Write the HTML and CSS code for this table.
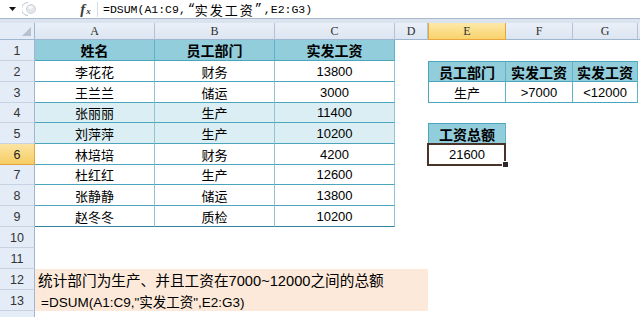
FILE: index.html
```html
<!DOCTYPE html>
<html lang="zh-CN">
<head>
<meta charset="utf-8">
<title>DSUM</title>
<link rel="stylesheet" href="styles.css">
</head>
<body>
<div class="fbar">
  <div class="nb"><svg width="8" height="5" viewBox="0 0 8 5"><path d="M0 0H7L3.5 4Z" fill="#111"/></svg></div>
  <div class="grip"><svg width="16" height="16" viewBox="0 0 16 16"><path d="M6 1.5A6.5 6.5 0 0 0 6 14.5" fill="none" stroke="#b9c2ce" stroke-width="1"/><circle cx="9" cy="8" r="4.5" fill="#e3e7ec" stroke="#c6ccd5" stroke-width="0.8"/><ellipse cx="8.5" cy="6.5" rx="2.5" ry="1.5" fill="#f7f8fa"/></svg></div>
  <div class="gap"></div>
  <div class="fx"><span class="fx-f">f</span><span class="fx-x">x</span></div>
  <div class="sep"></div>
  <div class="formula"><span class="mono">=DSUM(A1:C9,</span><span class="q ql">“</span><span class="fcj">实发工资</span><span class="q qr">”</span><span class="mono">,E2:G3)</span></div>
</div>
<div class="band"></div>
<div class="sheet">
  <!-- column headers -->
  <div class="corner"><svg width="9" height="9" viewBox="0 0 9 9"><path d="M9 0V9H0Z" fill="#b7c2d0"/></svg></div>
  <div class="ch">A</div><div class="ch">B</div><div class="ch">C</div><div class="ch">D</div><div class="ch sel">E</div><div class="ch">F</div><div class="ch">G</div><div class="ch end"></div>

  <!-- row 1 -->
  <div class="rh">1</div>
  <div class="c hd hR bB">姓名</div><div class="c hd hR bB">员工部门</div><div class="c hd hR bB">实发工资</div>
  <div class="c"></div><div class="c"></div><div class="c"></div><div class="c"></div><div class="c"></div>

  <!-- row 2 -->
  <div class="rh">2</div>
  <div class="c vR bB">李花花</div><div class="c vR bB">财务</div><div class="c vR bB">13800</div>
  <div class="c"></div>
  <div class="c hd bT bL hR bB">员工部门</div><div class="c hd bT hR bB">实发工资</div><div class="c hd bT hR bB">实发工资</div><div class="c"></div>

  <!-- row 3 -->
  <div class="rh">3</div>
  <div class="c vR bB">王兰兰</div><div class="c vR bB">储运</div><div class="c vR bB">3000</div>
  <div class="c"></div>
  <div class="c bL hR bB">生产</div><div class="c hR bB">&gt;7000</div><div class="c hR bB">&lt;12000</div><div class="c"></div>

  <!-- row 4 -->
  <div class="rh">4</div>
  <div class="c lt vR bB">张丽丽</div><div class="c lt vR bB">生产</div><div class="c lt vR bB">11400</div>
  <div class="c"></div><div class="c"></div><div class="c"></div><div class="c"></div><div class="c"></div>

  <!-- row 5 -->
  <div class="rh">5</div>
  <div class="c lt vR bB">刘萍萍</div><div class="c lt vR bB">生产</div><div class="c lt vR bB">10200</div>
  <div class="c"></div>
  <div class="c hd bT bL hR bB">工资总额</div><div class="c"></div><div class="c"></div><div class="c"></div>

  <!-- row 6 -->
  <div class="rh sel">6</div>
  <div class="c vR bB">林培培</div><div class="c vR bB">财务</div><div class="c vR bB">4200</div>
  <div class="c"></div>
  <div class="c active">21600</div><div class="c"></div><div class="c"></div><div class="c"></div>

  <!-- row 7 -->
  <div class="rh">7</div>
  <div class="c vR bB">杜红红</div><div class="c vR bB">生产</div><div class="c vR bB">12600</div>
  <div class="c"></div><div class="c"></div><div class="c"></div><div class="c"></div><div class="c"></div>

  <!-- row 8 -->
  <div class="rh">8</div>
  <div class="c vR bB">张静静</div><div class="c vR bB">储运</div><div class="c vR bB">13800</div>
  <div class="c"></div><div class="c"></div><div class="c"></div><div class="c"></div><div class="c"></div>

  <!-- row 9 -->
  <div class="rh">9</div>
  <div class="c vR last">赵冬冬</div><div class="c vR last">质检</div><div class="c vR last">10200</div>
  <div class="c"></div><div class="c"></div><div class="c"></div><div class="c"></div><div class="c"></div>

  <!-- row 10 -->
  <div class="rh">10</div>
  <div class="c"></div><div class="c"></div><div class="c"></div><div class="c"></div><div class="c"></div><div class="c"></div><div class="c"></div><div class="c"></div>

  <!-- row 11 -->
  <div class="rh">11</div>
  <div class="c"></div><div class="c"></div><div class="c"></div><div class="c"></div><div class="c"></div><div class="c"></div><div class="c"></div><div class="c"></div>

  <!-- row 12 -->
  <div class="rh">12</div>
  <div class="c note">统计部门为生产、并且工资在7000~12000之间的总额</div>
  <div class="c"></div><div class="c"></div><div class="c"></div><div class="c"></div>

  <!-- row 13 -->
  <div class="rh">13</div>
  <div class="c note n2">=DSUM(A1:C9,"实发工资",E2:G3)</div>
  <div class="c"></div><div class="c"></div><div class="c"></div><div class="c"></div>

  <!-- row 14 (only its top edge is visible) -->
  <div class="rh"></div>
  <div class="c"></div><div class="c"></div><div class="c"></div><div class="c"></div><div class="c"></div><div class="c"></div><div class="c"></div><div class="c"></div>
</div>
</body>
</html>
```
FILE: styles.css
```css
html, body {
  margin: 0;
  padding: 0;
}
body {
  width: 640px;
  height: 317px;
  overflow: hidden;
  background: #ffffff;
  font-family: "Liberation Sans", "Noto Sans CJK SC", sans-serif;
  font-size: 13px;
  color: #000;
}

/* formula bar */
.fbar {
  height: 18px;
  display: flex;
  align-items: center;
  background: #ffffff;
  border-bottom: 1px solid #a9b8cb;
}
.nb {
  width: 20px;
  display: flex;
  justify-content: center;
  padding-left: 6px;
  box-sizing: border-box;
}
.grip {
  width: 18px;
  height: 16px;
  display: flex;
  align-items: center;
  margin-left: 2px;
}
.gap {
  width: 34px;
}
.fx {
  width: 23px;
  display: flex;
  align-items: baseline;
  justify-content: center;
  font-family: "Liberation Serif", serif;
  font-style: italic;
  color: #3b3b3b;
}
.fx-f {
  font-size: 15px;
  font-weight: bold;
}
.fx-x {
  font-size: 9px;
  font-weight: bold;
  margin-left: 1px;
}
.sep {
  width: 1px;
  height: 15px;
  background: #d7dde6;
  margin-right: 5px;
}
.formula {
  white-space: nowrap;
  color: #000;
  display: flex;
  align-items: center;
}
.mono {
  font-family: "Liberation Mono", monospace;
  font-size: 11.5px;
}
.q {
  display: inline-block;
  width: 9px;
  overflow: hidden;
  font-family: "Liberation Mono", monospace;
  font-size: 12px;
}
.ql {
  text-align: right;
}
.qr {
  text-align: left;
}
.fcj {
  font-family: "Noto Sans CJK SC", sans-serif;
  font-size: 13px;
  letter-spacing: 2px;
}

.band {
  height: 4px;
  background: #dbe3ee;
}

/* sheet grid */
.sheet {
  display: grid;
  grid-template-columns: 35px 120px 120px 120px 33px 78px 67px 65px 2px;
  grid-template-rows: 17px 21px 21px 21px 20px 21px 21px 20px 21px 21px 21px 21px 21px 21px 21px;
}
.corner {
  background: #e4ecf7;
  border-right: 1px solid #9eb6ce;
  border-bottom: 1px solid #9eb6ce;
  display: flex;
  align-items: flex-end;
  justify-content: flex-end;
  padding: 0 3px 3px 0;
}
.ch {
  background: linear-gradient(#eaf0f8, #dce5f1);
  border-right: 1px solid #b3c2d5;
  border-bottom: 1px solid #9eb6ce;
  display: flex;
  align-items: center;
  justify-content: center;
  font-family: "Liberation Serif", serif;
  font-size: 12px;
  color: #2f2f2f;
}
.ch.sel {
  background: linear-gradient(#fde9a9, #f9d26c);
  border-left: 1px solid #eba642;
  border-right: 1px solid #eba642;
  border-bottom: 1px solid #eba642;
}
.ch.end {
  border-right: none;
}
.rh {
  background: #e4ecf7;
  border-right: 1px solid #9eb6ce;
  border-bottom: 1px solid #c7d3e3;
  display: flex;
  align-items: center;
  justify-content: center;
  font-size: 12.5px;
  color: #333;
  padding-top: 1px;
}
.rh.sel {
  background: linear-gradient(#fbe4a3, #f6cd63);
  border-right: 1px solid #e6a43f;
  border-bottom: 1px solid #e6a43f;
  color: #222;
}

.c {
  display: flex;
  align-items: center;
  justify-content: center;
  white-space: nowrap;
  min-width: 0;
  position: relative;
}
.hd {
  background: #92cddc;
  font-weight: bold;
  font-size: 14px;
}
.lt {
  background: #daeef3;
}
.bB {
  border-bottom: 1px solid #4ba6bd;
}
.last {
  border-bottom: 1px solid #31869b;
}
.bT {
  border-top: 1px solid #4ba6bd;
}
.bL {
  border-left: 1px solid #4ba6bd;
}
.vR {
  border-right: 1px solid #93c4d2;
}
.hR {
  border-right: 1px solid #5fb3c8;
}

.active::before {
  content: "";
  position: absolute;
  left: -1px;
  top: -1px;
  right: 0;
  bottom: -1px;
  border: 2px solid #4a3328;
}
.active::after {
  content: "";
  position: absolute;
  right: -3px;
  bottom: -3px;
  width: 5px;
  height: 5px;
  background: #2b2b2b;
  border: 1px solid #ffffff;
}

.note {
  grid-column: span 4;
  background: #fde9d9;
  justify-content: flex-start;
  padding-left: 3px;
  font-size: 14.67px;
  overflow: visible;
}
.note.n2 {
  padding-left: 6px;
  font-size: 13.5px;
}
```
